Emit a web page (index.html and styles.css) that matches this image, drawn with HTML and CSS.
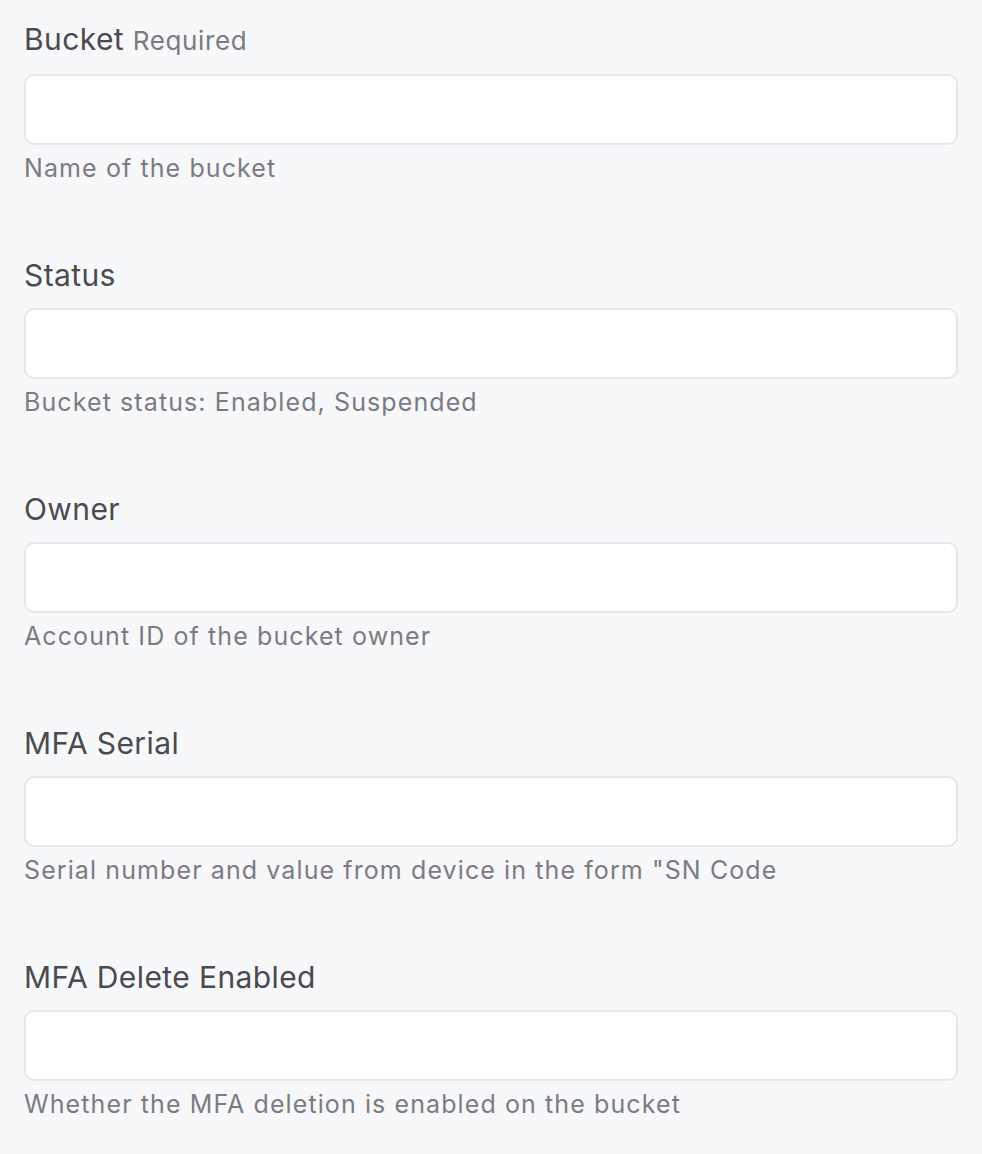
FILE: index.html
```html
<!DOCTYPE html>
<html lang="en">
<head>
<meta charset="utf-8">
<title>Bucket versioning</title>
<link rel="stylesheet" href="styles.css">
</head>
<body>
<form class="form">
  <div class="field">
    <label class="label" for="bucket">Bucket <span class="req">Required</span></label>
    <input class="input" id="bucket" type="text">
    <p class="desc">Name of the bucket</p>
  </div>
  <div class="field">
    <label class="label" for="status">Status</label>
    <input class="input" id="status" type="text">
    <p class="desc">Bucket status: Enabled, Suspended</p>
  </div>
  <div class="field">
    <label class="label" for="owner">Owner</label>
    <input class="input" id="owner" type="text">
    <p class="desc">Account ID of the bucket owner</p>
  </div>
  <div class="field">
    <label class="label" for="mfa">MFA Serial</label>
    <input class="input" id="mfa" type="text">
    <p class="desc">Serial number and value from device in the form "SN Code</p>
  </div>
  <div class="field">
    <label class="label" for="mfadel">MFA Delete Enabled</label>
    <input class="input" id="mfadel" type="text">
    <p class="desc">Whether the MFA deletion is enabled on the bucket</p>
  </div>
</form>
</body>
</html>
```
FILE: styles.css
```css
html, body {
  margin: 0;
  padding: 0;
  background: #f7f8fa;
}
body {
  font-family: Inter, "Noto Sans", sans-serif;
}
.form {
  display: flex;
  flex-direction: column;
  gap: 73px;
  padding: 21px 24px 0 24px;
}
.field {
  display: flex;
  flex-direction: column;
}
.label {
  font-size: 30px;
  line-height: 36px;
  color: #4a4a50;
  letter-spacing: 0.4px;
  margin-bottom: 15px;
}
.req {
  font-size: 26px;
  letter-spacing: 0.6px;
  color: #7b7b82;
}
.input {
  box-sizing: border-box;
  height: 71px;
  width: 100%;
  margin: 0;
  border: 2px solid #e6e6ec;
  border-radius: 10px;
  background: #ffffff;
  font: inherit;
  outline: none;
}
.desc {
  margin: 7px 0 0 0;
  font-size: 25px;
  line-height: 32px;
  letter-spacing: 1.1px;
  color: #7b7b82;
}
```
